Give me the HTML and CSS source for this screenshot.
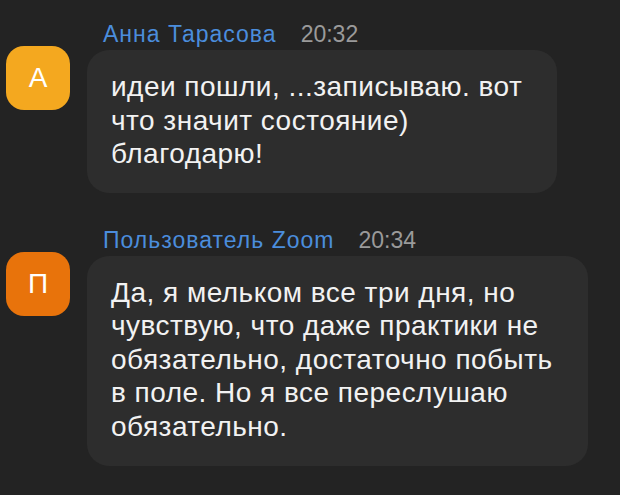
FILE: index.html
```html
<!DOCTYPE html>
<html lang="ru">
<head>
<meta charset="utf-8">
<link rel="stylesheet" href="styles.css">
</head>
<body>
<div class="chat">
  <div class="msg">
    <div class="avatar avatar-yellow">А</div>
    <div class="content">
      <div class="header"><span class="name">Анна Тарасова</span><span class="time">20:32</span></div>
      <div class="bubble">идеи пошли, ...записываю. вот<br>что значит состояние)<br>благодарю!</div>
    </div>
  </div>
  <div class="msg msg-second">
    <div class="avatar avatar-orange">П</div>
    <div class="content">
      <div class="header"><span class="name">Пользователь Zoom</span><span class="time">20:34</span></div>
      <div class="bubble bubble-long">Да, я мельком все три дня, но<br>чувствую, что даже практики не<br>обязательно, достаточно побыть<br>в поле. Но я все переслушаю<br>обязательно.</div>
    </div>
  </div>
</div>
</body>
</html>
```
FILE: styles.css
```css
html, body {
  margin: 0;
  padding: 0;
  background: #232323;
}
body {
  font-family: "Liberation Sans", Arial, sans-serif;
  width: 620px;
  height: 495px;
  overflow: hidden;
}
.chat {
  display: flex;
  flex-direction: column;
  padding: 21px 0 0 6px;
  gap: 34px;
}
.msg {
  display: flex;
  align-items: flex-start;
  gap: 17px;
}
.avatar {
  width: 64px;
  height: 64px;
  border-radius: 18px;
  margin-top: 25px;
  display: flex;
  align-items: center;
  justify-content: center;
  color: #fff;
  font-size: 28px;
  line-height: 1;
  flex: none;
}
.avatar-yellow { background: #f4a81f; }
.avatar-orange { background: #e8730b; }
.content {
  display: flex;
  flex-direction: column;
  align-items: flex-start;
}
.header {
  padding-left: 16px;
  font-size: 23px;
  line-height: 26px;
  display: flex;
  gap: 24px;
  margin-bottom: 3px;
}
.name { color: #4b8ddc; letter-spacing: 1px; }
.time { color: #9a9a9a; }
.bubble {
  background: #2d2d2d;
  border-radius: 22px;
  padding: 20px 35px 22px 24px;
  color: #f2f2f2;
  font-size: 28px;
  line-height: 33.5px;
  letter-spacing: 0.48px;
  white-space: nowrap;
}
.bubble-long {
  padding-bottom: 23px;
}
```
